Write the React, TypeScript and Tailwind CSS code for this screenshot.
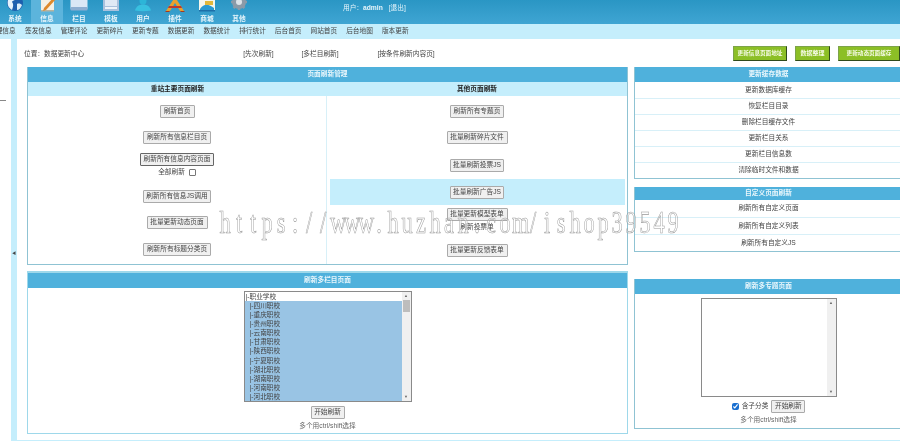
const font = '[font-family:"Liberation_Sans","Noto_Sans_CJK_SC",sans-serif]';

const navItems = ['系统', '信息', '栏目', '模板', '用户', '插件', '商城', '其他'];
const subItems = ['签发信息', '管理评论', '更新碎片', '更新专题', '数据更新', '数据统计', '排行统计', '后台首页', '网站首页', '后台地图', '版本更新'];
const cacheItems = ['更新数据库缓存', '恢复栏目目录', '删除栏目缓存文件', '更新栏目关系', '更新栏目信息数', '清除临时文件和数据'];
const customItems = ['刷新所有自定义页面', '刷新所有自定义列表', '刷新所有自定义JS'];
const schools = ['四川职校', '重庆职校', '贵州职校', '云南职校', '甘肃职校', '陕西职校', '宁夏职校', '湖北职校', '湖南职校', '河南职校', '河北职校'];
const watermark = 'https://www.huzhan.com/ishop39549';

function NavIcon({ index }: { index: number }) {
  const icons = [
    <g key="0">
      <circle cx="12" cy="3" r="8" fill="#1c5fae" />
      <path d="M5 0c-1 4 0 8 4 10 1-3 2-6 0-8 1-2 5-2 6-5-4-1-8 0-10 3z" fill="#e6f2fb" />
      <path d="M14 4c2-1 4 0 5 1-1 3-3 5-5 5z" fill="#d9ecf8" />
    </g>,
    <g key="1">
      <path d="M6-4h13v15H6z" fill="#f4f1e4" />
      <path d="M6 10h13v1.500H6z" fill="#b7b3a0" />
      <path d="M9 8 19-3l2 2L11 10l-3 1z" fill="#dd8a2b" />
    </g>,
    <g key="2">
      <rect x="3.500" y="-6" width="17" height="16" rx="2" fill="#dbe7f6" />
      <rect x="3.500" y="7" width="17" height="3.500" rx="1" fill="#8eaed2" />
    </g>,
    <g key="3">
      <rect x="4" y="-6" width="16" height="17" fill="#a9c1dd" />
      <rect x="6" y="-4" width="12" height="10" fill="#dfe9f5" />
      <rect x="6" y="7" width="12" height="2" fill="#eef4fa" />
    </g>,
    <g key="4">
      <circle cx="12" cy="1" r="3.500" fill="#2cb5d8" />
      <path d="M4 10.500c1-4 4-6 8-6s7 2 8 6c-5 1-11 1-16 0z" fill="#38c0e0" />
    </g>,
    <g key="5">
      <path d="M12-3 21 11h-4L12 3 7 11H3z" fill="#e9a02b" />
      <path d="M6 6h12l1 2H5z" fill="#c0392b" />
      <path d="M2 11h5l-1 1H3zM17 11h5l-1 1h-3z" fill="#a5391f" />
    </g>,
    <g key="6">
      <rect x="4" y="-4" width="16" height="15" fill="#f6f6ec" />
      <path d="M5 9c4-6 9-5 14-1v2H5z" fill="#2a9ad0" />
      <path d="M10 1h8v4h-8z" fill="#e2b83a" />
      <path d="M4 10h16v1.500H4z" fill="#1d6fa8" />
    </g>,
    <g key="7">
      <circle cx="12" cy="2" r="7" fill="#8b9aa8" />
      <path d="M12-6v3M12 7v3M4 2h3M17 2h3M6.500 8l2-2M15.500-2l2-2M6.500-4l2 2M15.500 6l2 2" stroke="#8b9aa8" strokeWidth="2.500" />
      <circle cx="12" cy="2" r="3" fill="#dde4ea" />
    </g>,
  ];
  return (
    <svg viewBox="0 0 24 15" className="h-[15px] w-6 shrink-0">
      {icons[index]}
    </svg>
  );
}

function Btn({ w, dark, children }: { w: string; dark?: boolean; children: React.ReactNode }) {
  return (
    <div className={`flex h-[13px] ${w} shrink-0 items-center justify-center rounded-[1px] border bg-[#f0f0f0] text-[6.7px] text-[#444] ${dark ? 'border-[#666]' : 'border-[#aaa]'}`}>
      {children}
    </div>
  );
}

function GreenBtn({ w, size, children }: { w: string; size: string; children: React.ReactNode }) {
  return (
    <div className={`flex h-[15px] ${w} ${size} shrink-0 items-center justify-center whitespace-nowrap border border-[#2f4a1c] border-t-[#7da34a] border-l-[#7da34a] bg-[#8cbf26] font-bold text-[#f6fbe6]`}>
      {children}
    </div>
  );
}

function PanelHead({ h = 'h-[15px]', children }: { h?: string; children: React.ReactNode }) {
  return (
    <div className={`flex ${h} items-center justify-center bg-[#4fb1dc] text-[6.7px] font-bold text-[#eaf7fc]`}>
      {children}
    </div>
  );
}

function ListPanel({ title, items, rowH, headH }: { title: string; items: string[]; rowH: string; headH?: string }) {
  return (
    <div className="border-b border-l border-[#8fc3d3]">
      <PanelHead h={headH}>{title}</PanelHead>
      {items.map((t, i) => (
        <div key={t} className={`flex ${rowH} items-center justify-center text-[6.7px] text-[#444] ${i > 0 ? 'border-t border-[#d8f0f8]' : ''}`}>
          {t}
        </div>
      ))}
    </div>
  );
}

function ScrollBar({ thumb }: { thumb?: boolean }) {
  return (
    <div className="flex w-[9px] shrink-0 flex-col items-center justify-between bg-[#f0f0f0] py-[2px] text-[4px] leading-none text-[#666]">
      <span>▲</span>
      {thumb && <div className="absolute top-[8px] h-3 w-[7px] bg-[#bdbdbd]" />}
      <span>▼</span>
    </div>
  );
}

export default function App() {
  return (
    <div className={`relative h-[441px] w-[900px] overflow-hidden bg-white blur-[0.3px] ${font}`}>
      <header className="flex h-6 bg-gradient-to-b from-[#2a96c4] to-[#3fa5d3]">
        <div className="ml-[-1px] flex">
          {navItems.map((n, i) => (
            <div key={n} className={`flex h-6 w-8 flex-col items-center ${i === 1 ? 'bg-[#5cb4dc]' : ''}`}>
              <NavIcon index={i} />
              <span className="text-[6.7px] font-bold leading-[8px] text-[#e6f5fb]">{n}</span>
            </div>
          ))}
        </div>
        <div className="ml-[88px] flex h-[17px] items-center gap-[6px] text-[6.7px] text-[#e6f5fb]">
          <span>
            用户：<b>admin</b>
          </span>
          <span>[退出]</span>
        </div>
      </header>

      <nav className="flex h-[15px] items-center overflow-hidden bg-[#c5eefc] text-[6.7px] text-[#444]">
        <span className="ml-[-11px] w-[36px] shrink-0">管理信息</span>
        {subItems.map((s) => (
          <span key={s} className="w-[35.7px] shrink-0">{s}</span>
        ))}
      </nav>

      <div className="flex">
        <aside className="flex h-[402px] w-[17px] shrink-0">
          <div className="mt-[61px] h-px w-[6px] bg-[#888]" />
          <div className="relative ml-[5px] w-[6px] bg-[#c5eefc]">
            <span className="absolute left-[1px] top-[212px] text-[4px] text-[#444]">◀</span>
          </div>
        </aside>

        <main className="w-[883px] shrink-0">
          <div className="flex h-7 items-center pt-[2px] text-[6.7px] text-[#444]">
            <span className="ml-[7px] w-[222px]">位置：数据更新中心</span>
            <span className="w-[59px]">[先次刷新]</span>
            <span className="w-[77px]">[多栏目刷新]</span>
            <span className="w-[360px]">[按条件刷新内容页]</span>
            <div className="-mt-[2px] flex gap-2">
              <GreenBtn w="w-[54px]" size="text-[5.6px]">更新信息页面地址</GreenBtn>
              <GreenBtn w="w-[35px]" size="text-[6px]">数据整理</GreenBtn>
              <GreenBtn w="w-[62px]" size="text-[5.6px]">更新动态页面缓存</GreenBtn>
            </div>
          </div>

          <div className="flex gap-[6px] pl-[10px]">
            <div className="w-[601px] shrink-0">
              <section className="h-[198px] border-x border-b border-[#8fc3d3]">
                <PanelHead>页面刷新管理</PanelHead>
                <div className="flex h-[14px] items-center bg-[#c5eefc] text-[6.7px] font-bold text-[#222]">
                  <span className="w-[299px] text-center">重站主要页面刷新</span>
                  <span className="flex-1 text-center">其他页面刷新</span>
                </div>
                <div className="flex h-[168px] text-[6.7px] text-[#444]">
                  <div className="flex w-[299px] flex-col items-center border-r border-[#d8f0f8] pt-[9px]">
                    <Btn w="w-[35px]">刷新首页</Btn>
                    <div className="mt-[13px]"><Btn w="w-[68px]">刷新所有信息栏目页</Btn></div>
                    <div className="mt-[9px]"><Btn w="w-[74px]" dark>刷新所有信息内容页面</Btn></div>
                    <div className="flex h-3 items-center gap-1">
                      全部刷新
                      <span className="h-[7px] w-[7px] rounded-[1px] border border-[#777]" />
                    </div>
                    <div className="mt-3"><Btn w="w-[68px]">刷新所有信息JS调用</Btn></div>
                    <div className="mt-[13px]"><Btn w="w-[61px]">批量更新动态页面</Btn></div>
                    <div className="mt-[14px]"><Btn w="w-[68px]">刷新所有标题分类页</Btn></div>
                  </div>
                  <div className="flex flex-1 flex-col items-center pt-[9px]">
                    <Btn w="w-[54px]">刷新所有专题页</Btn>
                    <div className="mt-[13px]"><Btn w="w-[61px]">批量刷新碎片文件</Btn></div>
                    <div className="mt-[15px]"><Btn w="w-[54px]">批量刷新投票JS</Btn></div>
                    <div className="mt-[7px] flex h-[26px] w-[295px] items-center justify-center bg-[#c5eefc]">
                      <Btn w="w-[54px]">批量刷新广告JS</Btn>
                    </div>
                    <div className="mt-[3px]"><Btn w="w-[61px]">批量更新模型表单</Btn></div>
                    <div className="flex h-3 items-center">刷新投票单</div>
                    <div className="mt-[11px]"><Btn w="w-[61px]">批量更新反馈表单</Btn></div>
                  </div>
                </div>
              </section>

              <section className="mt-[6px] flex h-[163px] flex-col items-center border border-t-2 border-[#9ed8ea]">
                <div className="w-full"><PanelHead>刷新多栏目页面</PanelHead></div>
                <div className="relative mt-[3px] flex h-[111px] w-[168px] border border-[#8a8a8a] text-[6.7px] leading-[9.1px] text-[#444]">
                  <div className="flex-1">
                    <div className="h-[9px] pl-[1px]">|-职业学校</div>
                    <div className="bg-[#99c4e4] pl-[5px]">
                      {schools.map((s) => (
                        <div key={s}>|-{s}</div>
                      ))}
                    </div>
                  </div>
                  <ScrollBar thumb />
                </div>
                <div className="mt-1"><Btn w="w-[34px]">开始刷新</Btn></div>
                <div className="mt-[2px] text-[6.7px] text-[#666]">多个用ctrl/shift选择</div>
              </section>
            </div>

            <div className="w-[268px] shrink-0">
              <ListPanel title="更新缓存数据" items={cacheItems} rowH="h-[16px]" />
              <div className="mt-2">
                <ListPanel title="自定义页面刷新" items={customItems} rowH="h-[17px]" headH="h-[13px]" />
              </div>
              <section className="mt-[27px] flex h-[150px] flex-col items-center border-b border-l border-[#8fc3d3]">
                <div className="w-full"><PanelHead>刷新多专题页面</PanelHead></div>
                <div className="relative mt-1 flex h-[99px] w-[136px] border border-[#8a8a8a]">
                  <div className="flex-1" />
                  <ScrollBar />
                </div>
                <div className="mt-[3px] flex items-center gap-[3px] text-[6.7px] text-[#444]">
                  <input type="checkbox" defaultChecked className="h-[7px] w-[7px] accent-[#1a6fd0]" />
                  含子分类
                  <Btn w="w-[34px]">开始刷新</Btn>
                </div>
                <div className="mt-[2px] text-[6.7px] text-[#666]">多个用ctrl/shift选择</div>
              </section>
            </div>
          </div>
          <div className="mt-[6px] h-px bg-[#c5eefc]" />
        </main>
      </div>

      <div className="absolute left-[218px] top-[204px] flex origin-left scale-x-[0.7] [font-family:'Liberation_Serif',serif] text-[32px] leading-9 text-white/30 [-webkit-text-stroke:0.6px_#999]">
        {watermark.split('').map((c, i) => (
          <span key={i} className="w-5 shrink-0 text-center">{c}</span>
        ))}
      </div>
    </div>
  );
}
